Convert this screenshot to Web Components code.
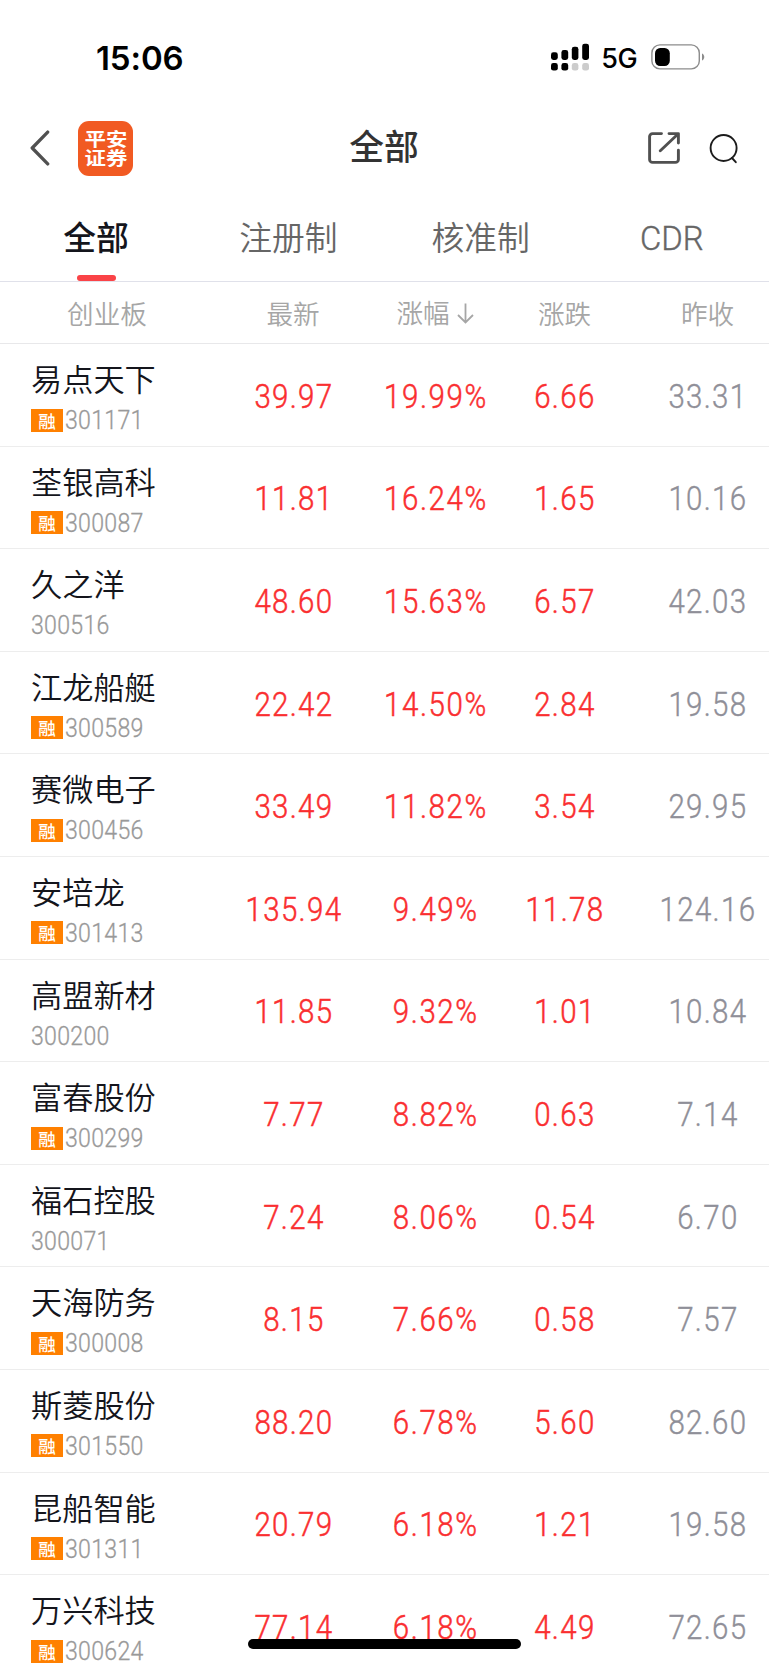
<!DOCTYPE html>
<html lang="zh-CN">
<head>
<meta charset="utf-8">
<title>全部</title>
<style>
  html, body {
    margin: 0;
    height: 1665px;
    overflow: hidden;
    background: #fff;
    font-family: Roboto, "Noto Sans CJK SC", sans-serif;
  }
</style>
</head>
<body>
<stock-page></stock-page>

<script>
(function (customElements) {
    // Attaches an open shadow root and fills it with the given markup.
    const mount = (host, html) => {
        const template = document.createElement('template');
        template.innerHTML = html;
        host.attachShadow({ mode: 'open' }).appendChild(template.content.cloneNode(true));
    };

    // Shared column widths for the table head and the rows
    const COLUMNS = '215px 157px 128px 130px 156px';

    class StatusBar extends HTMLElement {
        constructor() {
            super();
            mount(this, `
      <style>
        :host { display: flex; align-items: center; height: 116px; padding: 0 64px 0 96px; box-sizing: border-box; font-family: Inter, sans-serif; color: #000; }
        .time { font-size: 33px; font-weight: 600; flex: 1; line-height: 40px; letter-spacing: -0.1px; }
        .net { font-size: 27px; font-weight: 500; line-height: 34px; margin: 2px 14px 0 11px; letter-spacing: -0.6px; }
        svg { display: block; }
        .signal { margin-top: -2px; }
        .battery { margin-top: -2px; }
      </style>
      <span class="time">15:06</span>
      <svg class="signal" width="39" height="28" viewBox="0 0 39 28">
        <rect x="0" y="9.3" width="6.8" height="7.7" rx="2.4"/>
        <rect x="10.4" y="7" width="6.8" height="10" rx="2.4"/>
        <rect x="20.8" y="3.8" width="6.6" height="13.2" rx="2.4"/>
        <rect x="31.2" y="0.7" width="6.8" height="16.3" rx="2.4"/>
        <rect x="0" y="20" width="6.8" height="7.6" rx="2.4"/>
        <rect x="10.4" y="20" width="6.8" height="7.6" rx="2.4"/>
        <rect x="20.8" y="20" width="6.6" height="7.6" rx="2.4" fill="#ccc"/>
        <rect x="31.2" y="20" width="6.8" height="7.6" rx="2.4" fill="#ccc"/>
      </svg>
      <span class="net">5G</span>
      <svg class="battery" width="54" height="26" viewBox="0 0 54 26">
        <rect x="0.9" y="0.9" width="47.4" height="24" rx="8" fill="none" stroke="#8c8c8c" stroke-width="1.4"/>
        <rect x="4" y="4" width="14.8" height="18" rx="5.2"/>
        <path d="M51 9.5c3 1.2 3 5.8 0 7z" fill="#8c8c8c"/>
      </svg>`);
        }
    }

    class BrandLogo extends HTMLElement {
        constructor() {
            super();
            mount(this, `
      <style>
        :host { display: flex; align-items: center; justify-content: center; width: 55px; height: 55px; border-radius: 11px; background: #f15a22; color: #fff; }
        span { font: 700 18px/19px "Noto Sans CJK SC", sans-serif; transform: scaleX(1.19); white-space: nowrap; }
      </style>
      <span>平安<br>证券</span>`);
        }
    }

    class NavBar extends HTMLElement {
        constructor() {
            super();
            mount(this, `
      <style>
        :host { display: grid; grid-template-columns: 1fr auto 1fr; align-items: center; height: 64px; padding: 0 30px 0 29px; }
        .left, .right { display: flex; align-items: center; }
        .left { gap: 27px; }
        .right { justify-content: flex-end; gap: 29px; }
        .title { font-size: 34.8px; font-weight: 500; line-height: 40px; color: #333; }
        svg { display: block; fill: none; stroke-linecap: round; stroke-linejoin: round; }
      </style>
      <div class="left">
        <svg width="22" height="36" viewBox="0 0 22 36" stroke="#505050" stroke-width="3.3"><path d="M18.7 2.1 3.2 18l15.5 15.9"/></svg>
        <brand-logo></brand-logo>
      </div>
      <span class="title"><slot></slot></span>
      <div class="right">
        <svg width="32" height="32" viewBox="0 0 32 32" stroke="#505050" stroke-width="2.9">
          <path d="M13.5 1.6H4.6a3 3 0 0 0-3 3v22.8a3 3 0 0 0 3 3h22.8a3 3 0 0 0 3-3v-9.1"/>
          <path d="M21 1.6h9.4v9.5M30 2 12.3 18.8"/>
        </svg>
        <svg width="30" height="32" viewBox="0 0 30 32" stroke="#1c1c1c" stroke-width="1.9">
          <circle cx="14.6" cy="16" r="13"/><path d="m23 26 3.8 4.2"/>
        </svg>
      </div>`);
        }
    }

    class TabItem extends HTMLElement {
        constructor() {
            super();
            mount(this, `
      <style>
        :host { flex: 1; display: flex; flex-direction: column; align-items: center; justify-content: space-between; padding-top: 38px; font-size: 32.8px; line-height: 42px; font-weight: 350; color: #666; }
        :host([active]) { font-weight: 500; color: #14151c; }
        :host([latin]) span { -webkit-text-stroke: .4px currentColor; margin-right: 2px; }
        i { width: 39px; height: 6px; border-radius: 3px; }
        :host([active]) i { background: #fa4347; }
      </style>
      <span><slot></slot></span><i></i>`);
        }
    }

    class TabBar extends HTMLElement {
        constructor() {
            super();
            mount(this, `
      <style>
        :host { display: flex; height: 101px; border-bottom: 1px solid #e0e1ea; }
      </style>
      <slot></slot>`);
        }
    }

    class TableHead extends HTMLElement {
        constructor() {
            super();
            mount(this, `
      <style>
        :host { display: grid; grid-template-columns: ${COLUMNS}; align-items: center; height: 61px; border-bottom: 1px solid #e8e8ea; font-size: 26.6px; font-weight: 350; line-height: 34px; color: #a6a6a6; }
        span { display: flex; justify-content: center; align-items: center; gap: 7px; padding: 4px 1px 0 0; }
        .sorted { padding: 2px 2px 0 0; }
      </style>
      <span>创业板</span>
      <span>最新</span>
      <span class="sorted">涨幅<svg width="17" height="21" viewBox="0 0 17 21" fill="none" stroke="#a6a6a6" stroke-width="1.8"><path d="M8.5.5v19M1 12l7.5 7.5L16 12"/></svg></span>
      <span>涨跌</span>
      <span>昨收</span>`);
        }
    }

    class StockRow extends HTMLElement {
        constructor() {
            super();
            const { name, code, margin, price, percent, change, prev } = this.dataset;
            mount(this, `
      <style>
        :host { display: grid; grid-template-columns: ${COLUMNS}; flex: none; height: 102.6px; box-sizing: border-box; border-bottom: 1px solid #ededed; color: #fa2e30; }
        .stock { padding: 17px 0 0 31px; }
        .name { font-size: 31.2px; font-weight: 350; line-height: 40px; color: #14151c; white-space: nowrap; }
        .meta { display: flex; align-items: center; gap: 2px; height: 24px; margin-top: 7px; color: #999; }
        .tag { width: 32px; height: 23px; background: #ff8000; color: #fff; font: 500 17.5px/23px "Noto Sans CJK SC", sans-serif; text-align: center; }
        .code { font-size: 26px; font-weight: 300; line-height: 24px; letter-spacing: .3px; transform: scaleX(.89); transform-origin: 0 50%; -webkit-text-stroke: .3px currentColor; }
        .num { display: flex; justify-content: center; align-items: center; padding-top: 4px; font-size: 33.5px; line-height: 40px; font-weight: 300; letter-spacing: 1.5px; -webkit-text-stroke: .5px currentColor; }
        .num span { transform: scaleX(.88); }
        .percent { letter-spacing: 1.8px; }
        .prev { color: #8f8f98; -webkit-text-stroke-width: .4px; }
      </style>
      <div class="stock">
        <div class="name">${name}</div>
        <div class="meta">${margin === undefined ? '' : '<span class="tag">融</span>'}<span class="code">${code}</span></div>
      </div>
      <div class="num"><span>${price}</span></div>
      <div class="num percent"><span>${percent}</span></div>
      <div class="num"><span>${change}</span></div>
      <div class="num prev"><span>${prev}</span></div>`);
        }
    }

    class StockPage extends HTMLElement {
        constructor() {
            super();
            mount(this, `
      <style>
        :host { display: flex; flex-direction: column; position: relative; width: 769px; height: 1665px; overflow: hidden; background: #fff; }
        status-bar, nav-bar, tab-bar, table-head { flex: none; }
        .list { display: flex; flex-direction: column; }
        .home { position: absolute; left: 248px; bottom: 16px; width: 273px; height: 10px; border-radius: 5px; background: #000; }
      </style>
      <status-bar></status-bar>
      <nav-bar>全部</nav-bar>
      <tab-bar>
        <tab-item active>全部</tab-item>
        <tab-item>注册制</tab-item>
        <tab-item>核准制</tab-item>
        <tab-item latin>CDR</tab-item>
      </tab-bar>
      <table-head></table-head>
      <div class="list">
        <stock-row data-name="易点天下" data-code="301171" data-margin data-price="39.97" data-percent="19.99%" data-change="6.66" data-prev="33.31"></stock-row>
        <stock-row data-name="荃银高科" data-code="300087" data-margin data-price="11.81" data-percent="16.24%" data-change="1.65" data-prev="10.16"></stock-row>
        <stock-row data-name="久之洋" data-code="300516" data-price="48.60" data-percent="15.63%" data-change="6.57" data-prev="42.03"></stock-row>
        <stock-row data-name="江龙船艇" data-code="300589" data-margin data-price="22.42" data-percent="14.50%" data-change="2.84" data-prev="19.58"></stock-row>
        <stock-row data-name="赛微电子" data-code="300456" data-margin data-price="33.49" data-percent="11.82%" data-change="3.54" data-prev="29.95"></stock-row>
        <stock-row data-name="安培龙" data-code="301413" data-margin data-price="135.94" data-percent="9.49%" data-change="11.78" data-prev="124.16"></stock-row>
        <stock-row data-name="高盟新材" data-code="300200" data-price="11.85" data-percent="9.32%" data-change="1.01" data-prev="10.84"></stock-row>
        <stock-row data-name="富春股份" data-code="300299" data-margin data-price="7.77" data-percent="8.82%" data-change="0.63" data-prev="7.14"></stock-row>
        <stock-row data-name="福石控股" data-code="300071" data-price="7.24" data-percent="8.06%" data-change="0.54" data-prev="6.70"></stock-row>
        <stock-row data-name="天海防务" data-code="300008" data-margin data-price="8.15" data-percent="7.66%" data-change="0.58" data-prev="7.57"></stock-row>
        <stock-row data-name="斯菱股份" data-code="301550" data-margin data-price="88.20" data-percent="6.78%" data-change="5.60" data-prev="82.60"></stock-row>
        <stock-row data-name="昆船智能" data-code="301311" data-margin data-price="20.79" data-percent="6.18%" data-change="1.21" data-prev="19.58"></stock-row>
        <stock-row data-name="万兴科技" data-code="300624" data-margin data-price="77.14" data-percent="6.18%" data-change="4.49" data-prev="72.65"></stock-row>
      </div>
      <div class="home"></div>`);
        }
    }

    customElements.define('status-bar', StatusBar);
    customElements.define('brand-logo', BrandLogo);
    customElements.define('nav-bar', NavBar);
    customElements.define('tab-item', TabItem);
    customElements.define('tab-bar', TabBar);
    customElements.define('table-head', TableHead);
    customElements.define('stock-row', StockRow);
    customElements.define('stock-page', StockPage);
})(window.customElements);
</script>
</body>
</html>
